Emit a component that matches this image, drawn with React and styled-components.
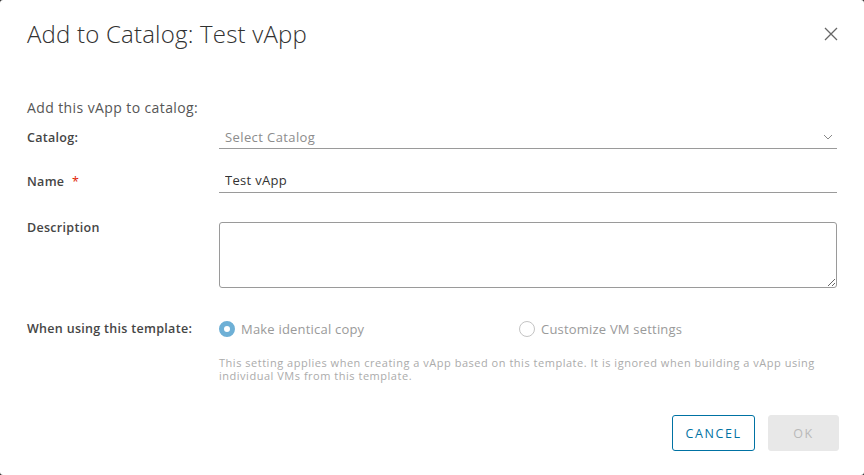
import React from "react";
import styled, { createGlobalStyle } from "styled-components";

const GlobalStyle = createGlobalStyle`
  html, body {
    margin: 0;
    padding: 0;
    background: #2b2b2b;
  }
  body {
    font-family: "Open Sans", "Liberation Sans", sans-serif;
  }
`;

class App extends React.Component {
  render() {
    return (
      <>
        <GlobalStyle />
        <Dialog>
          <Header>
            <Title>Add to Catalog: Test vApp</Title>
            <CloseButton aria-label="Close">
              <svg width="14" height="14" viewBox="0 0 14 14">
                <path d="M1 1 L13 13 M13 1 L1 13" stroke="#666" strokeWidth="1.3" fill="none" />
              </svg>
            </CloseButton>
          </Header>
          <Body>
            <Intro>Add this vApp to catalog:</Intro>
            <Row height="22px">
              <Label>Catalog:</Label>
              <SelectBox>
                <Placeholder>Select Catalog</Placeholder>
                <svg width="10" height="6" viewBox="0 0 10 6">
                  <path d="M1 1 L5 5 L9 1" stroke="#888" strokeWidth="1" fill="none" />
                </svg>
              </SelectBox>
            </Row>
            <Row height="22px" gap="21px">
              <Label>
                Name <Required>*</Required>
              </Label>
              <TextInput defaultValue="Test vApp" />
            </Row>
            <Row gap="29px" align="start">
              <Label lh="12px">Description</Label>
              <TextArea />
            </Row>
            <Row gap="32px">
              <Label>When using this template:</Label>
              <RadioGroup>
                <RadioOption>
                  <Radio checked />
                  <RadioText>Make identical copy</RadioText>
                </RadioOption>
                <RadioOption>
                  <Radio />
                  <RadioText>Customize VM settings</RadioText>
                </RadioOption>
              </RadioGroup>
            </Row>
            <Row gap="18px">
              <span />
              <Help>
                This setting applies when creating a vApp based on this template. It is ignored when building a vApp using
                individual VMs from this template.
              </Help>
            </Row>
          </Body>
          <Footer>
            <Button variant="outline">CANCEL</Button>
            <Button variant="disabled">OK</Button>
          </Footer>
        </Dialog>
      </>
    );
  }
}

const Dialog = styled.div`
  width: 864px;
  height: 475px;
  box-sizing: border-box;
  background: #ffffff;
  border-radius: 3px;
  display: flex;
  flex-direction: column;
  overflow: hidden;
`;

const Header = styled.div`
  display: flex;
  justify-content: space-between;
  align-items: center;
  padding: 19px 25px 0 27px;
`;

const Title = styled.h3`
  margin: 0;
  font-size: 24px;
  font-weight: 300;
  letter-spacing: 0.2px;
  line-height: 30px;
  color: #313131;
`;

const CloseButton = styled.button`
  border: none;
  background: none;
  padding: 0;
  width: 16px;
  height: 16px;
  display: flex;
  align-items: center;
  justify-content: center;
  cursor: pointer;
`;

const Body = styled.div`
  padding: 0 27px;
  flex: 1;
`;

const Intro = styled.p`
  margin: 51px 0 0;
  font-size: 14px;
  letter-spacing: 0.4px;
  line-height: 16px;
  color: #565656;
`;

const Row = styled.div`
  display: grid;
  grid-template-columns: 192px 1fr;
  align-items: ${(p) => p.align || "center"};
  margin-top: ${(p) => p.gap || "10px"};
  min-height: ${(p) => p.height || "auto"};
`;

const Label = styled.label`
  font-size: 12.5px;
  font-weight: 600;
  letter-spacing: 0.3px;
  line-height: ${(p) => p.lh || "16px"};
  color: #454545;
`;

const Required = styled.span`
  color: #e12200;
  font-weight: 400;
  margin-left: 4px;
`;

const SelectBox = styled.div`
  display: flex;
  align-items: center;
  justify-content: space-between;
  height: 22px;
  border-bottom: 1px solid #9a9a9a;
  padding: 0 4px 0 6px;
`;

const Placeholder = styled.span`
  font-size: 13px;
  letter-spacing: 0.4px;
  color: #8c8c8c;
`;

const TextInput = styled.input`
  height: 20px;
  padding: 0 6px 2px;
  box-sizing: content-box;
  border: none;
  border-bottom: 1px solid #9a9a9a;
  font-family: inherit;
  font-size: 13px;
  letter-spacing: 0.3px;
  color: #333;
  outline: none;
`;

const TextArea = styled.textarea`
  height: 66px;
  box-sizing: border-box;
  border: 1px solid #9a9a9a;
  border-radius: 3px;
  font-family: inherit;
  resize: vertical;
  outline: none;
`;

const RadioGroup = styled.div`
  display: grid;
  grid-template-columns: 300px 1fr;
`;

const RadioOption = styled.div`
  display: flex;
  align-items: center;
  gap: 6px;
`;

const Radio = styled.span`
  width: 16px;
  height: 16px;
  box-sizing: border-box;
  border-radius: 50%;
  border: ${(p) => (p.checked ? "5px solid #6eb0d6" : "1px solid #c4c4c4")};
  background: #fff;
`;

const RadioText = styled.span`
  font-size: 13px;
  letter-spacing: 0.2px;
  color: #9a9a9a;
`;

const Help = styled.p`
  margin: 0;
  font-size: 11px;
  letter-spacing: 0.52px;
  line-height: 13px;
  color: #ababab;
`;

const Footer = styled.div`
  display: flex;
  justify-content: flex-end;
  gap: 13px;
  padding: 0 25px 24px;
`;

const Button = styled.button`
  height: 36px;
  box-sizing: border-box;
  padding: 0;
  width: ${(p) => (p.variant === "outline" ? "83px" : "71px")};
  border-radius: 3px;
  font-family: inherit;
  font-size: 12.5px;
  letter-spacing: 1.6px;
  border: 1px solid ${(p) => (p.variant === "outline" ? "#0072a3" : "#e8e8e8")};
  background: ${(p) => (p.variant === "outline" ? "#fff" : "#e8e8e8")};
  color: ${(p) => (p.variant === "outline" ? "#0072a3" : "#b9b9b9")};
`;

export default App;
